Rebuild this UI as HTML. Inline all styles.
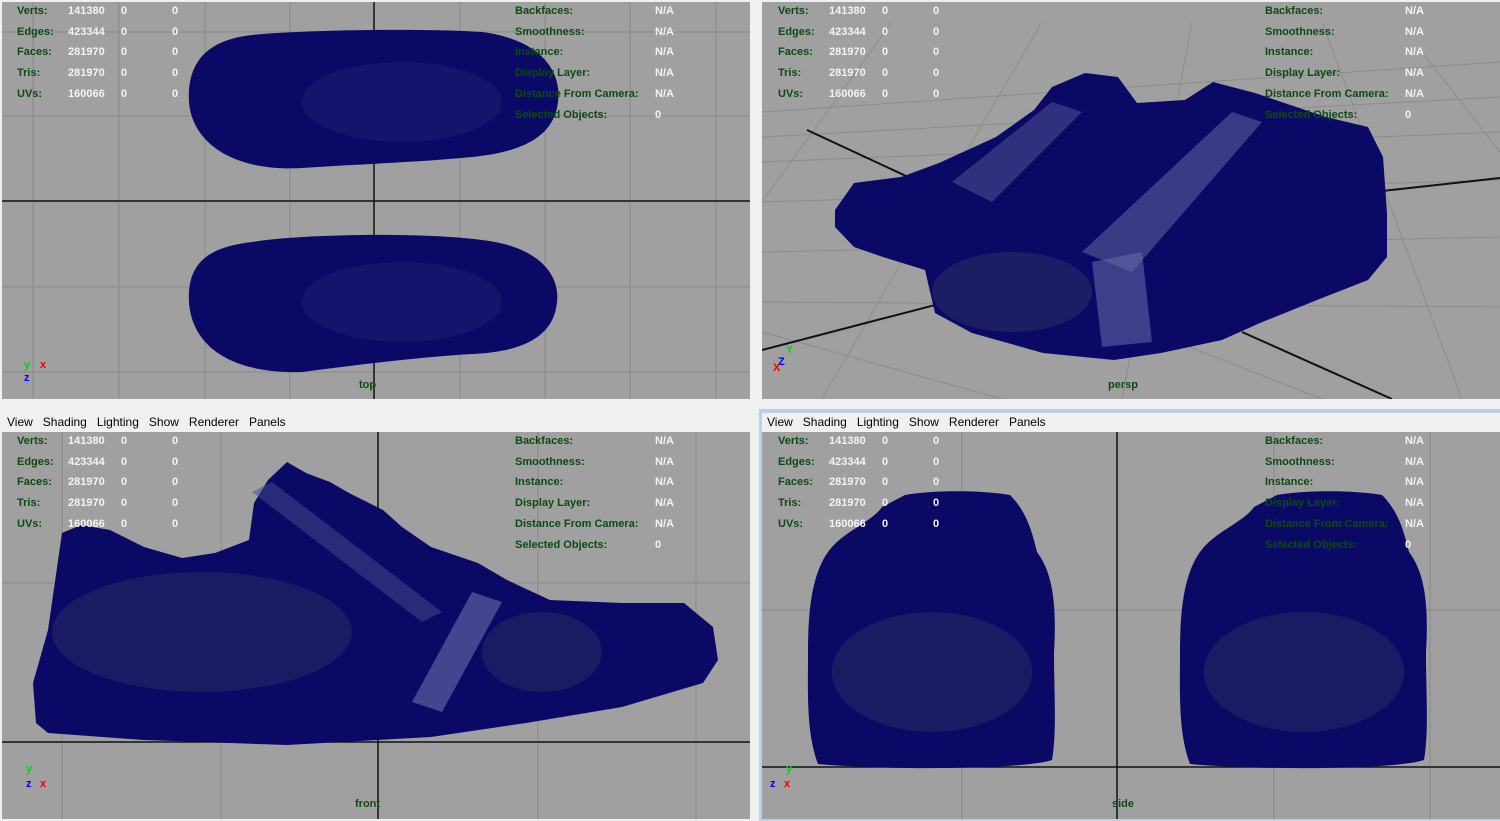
<!DOCTYPE html>
<html><head><meta charset="utf-8"><style>
*{margin:0;padding:0}
body{width:1500px;height:821px;background:#f0f0f0;position:relative;overflow:hidden;font-family:"Liberation Sans",sans-serif}
.vp{position:absolute;background:#a0a0a0;overflow:hidden}
.vp svg{position:absolute;left:0;top:0}
.t{position:absolute;font-size:11px;font-weight:bold;line-height:12px;white-space:nowrap}
.g{color:#0c4a12}.w{color:#f4f4f4}
.menu{position:absolute;height:19px;font-size:12px;line-height:19px;color:#000;background:#f0f0f0}
.menu span{margin-right:10px}
</style></head><body>

<!-- top-left: top -->
<div class="vp" style="left:2px;top:2px;width:748px;height:397px">
<svg width="748" height="397">
<g stroke="#8a8a8a" stroke-width="1">
<line x1="31" y1="0" x2="31" y2="397"/><line x1="117" y1="0" x2="117" y2="397"/><line x1="203" y1="0" x2="203" y2="397"/><line x1="288" y1="0" x2="288" y2="397"/><line x1="458" y1="0" x2="458" y2="397"/><line x1="543" y1="0" x2="543" y2="397"/><line x1="628" y1="0" x2="628" y2="397"/><line x1="714" y1="0" x2="714" y2="397"/>
<line x1="0" y1="30" x2="748" y2="30"/><line x1="0" y1="114" x2="748" y2="114"/><line x1="0" y1="285" x2="748" y2="285"/><line x1="0" y1="370" x2="748" y2="370"/>
</g>
<line x1="372" y1="0" x2="372" y2="397" stroke="#111" stroke-width="1.5"/>
<line x1="0" y1="199" x2="748" y2="199" stroke="#111" stroke-width="1.5"/>
<path d="M250 33 C300 28 420 26 480 30 C540 38 560 70 556 100 C552 135 520 150 470 155 C420 160 360 162 300 166 C230 170 190 140 187 100 C185 60 205 38 250 33Z" fill="#0a0a66"/>
<path d="M250 240 C300 232 420 230 480 238 C540 245 558 275 555 300 C552 335 520 350 470 352 C420 355 360 362 300 370 C230 372 190 345 187 300 C185 262 205 245 250 240Z" fill="#0a0a66"/>
<ellipse cx="400" cy="100" rx="100" ry="40" fill="#1a1a70" opacity=".6"/>
<ellipse cx="400" cy="300" rx="100" ry="40" fill="#1a1a70" opacity=".6"/>
</svg>
<div class="t" style="left:22px;top:357px;color:#1c1;font-size:11px">y</div>
<div class="t" style="left:38px;top:357px;color:#e00">x</div>
<div class="t" style="left:22px;top:370px;color:#00f">z</div>
<div class="t g" style="left:357px;top:377px">top</div>
</div>

<!-- top-right: persp -->
<div class="vp" style="left:762px;top:2px;width:738px;height:397px">
<svg width="738" height="397">
<g stroke="#8c8c8c" stroke-width="1" fill="none">
<line x1="0" y1="110" x2="738" y2="60"/><line x1="0" y1="135" x2="738" y2="95"/><line x1="0" y1="160" x2="738" y2="130"/><line x1="0" y1="200" x2="738" y2="178"/><line x1="0" y1="250" x2="738" y2="235"/><line x1="0" y1="300" x2="738" y2="305"/>
<line x1="130" y1="20" x2="0" y2="200"/><line x1="280" y1="20" x2="60" y2="397"/><line x1="430" y1="20" x2="360" y2="397"/><line x1="560" y1="20" x2="700" y2="397"/><line x1="660" y1="50" x2="738" y2="150"/>
<line x1="0" y1="330" x2="240" y2="397"/><line x1="160" y1="240" x2="560" y2="397"/>
</g>
<line x1="0" y1="348" x2="300" y2="270" stroke="#111" stroke-width="2"/>
<line x1="520" y1="200" x2="738" y2="176" stroke="#111" stroke-width="2"/>
<line x1="45" y1="128" x2="200" y2="200" stroke="#111" stroke-width="2"/>
<line x1="480" y1="330" x2="630" y2="397" stroke="#111" stroke-width="2"/>
<path d="M73 208 L92 181 L139 175 L177 161 L234 135 L272 108 L290 85 L323 71 L356 75 L375 101 L423 98 L451 80 L493 91 L564 115 L606 125 L621 155 L625 211 L625 255 L606 278 L555 298 L498 321 L460 338 L399 351 L352 358 L281 351 L210 331 L173 311 L163 268 L121 255 L92 245 L73 225Z" fill="#0a0a66"/>
<path d="M190 180 L290 100 L320 110 L230 200Z" fill="#4a4a90" opacity=".6"/>
<path d="M320 250 L470 110 L500 120 L370 270Z" fill="#5a5a9a" opacity=".6"/>
<path d="M330 260 L380 250 L390 340 L340 345Z" fill="#6a6aa8" opacity=".55"/>
<ellipse cx="250" cy="290" rx="80" ry="40" fill="#2a2a60" opacity=".6"/>
</svg>
<div class="t" style="left:24px;top:342px;color:#1c1">Y</div>
<div class="t" style="left:16px;top:354px;color:#00f">Z</div>
<div class="t" style="left:11px;top:360px;color:#e00">X</div>
<div class="t g" style="left:346px;top:377px">persp</div>
</div>

<!-- bottom-left menu -->
<div class="menu" style="left:0;top:413px;width:750px;padding-left:7px"><span>View</span><span>Shading</span><span>Lighting</span><span>Show</span><span>Renderer</span><span>Panels</span></div>

<!-- bottom-left: front -->
<div class="vp" style="left:2px;top:432px;width:748px;height:387px">
<svg width="748" height="387">
<g stroke="#8a8a8a"><line x1="60" y1="0" x2="60" y2="387"/><line x1="219" y1="0" x2="219" y2="387"/><line x1="536" y1="0" x2="536" y2="387"/><line x1="694" y1="0" x2="694" y2="387"/><line x1="0" y1="151" x2="748" y2="151"/></g>
<line x1="376" y1="0" x2="376" y2="387" stroke="#111" stroke-width="1.5"/>
<line x1="0" y1="310" x2="748" y2="310" stroke="#111" stroke-width="1.5"/>
<path d="M34 291 L31 251 L46 198 L60 101 L79 93 L108 98 L142 115 L180 126 L213 121 L247 108 L252 71 L266 48 L285 30 L304 41 L328 50 L347 61 L381 78 L400 95 L429 115 L476 131 L505 148 L548 168 L620 171 L682 171 L711 195 L716 228 L701 251 L620 275 L524 291 L429 305 L285 313 L142 308 L46 301Z" fill="#0a0a66"/>
<path d="M410 270 L470 160 L500 170 L440 280Z" fill="#6a6aaa" opacity=".6"/>
<path d="M250 60 L420 190 L440 180 L270 50Z" fill="#4a4a90" opacity=".5"/>
<ellipse cx="200" cy="200" rx="150" ry="60" fill="#262660" opacity=".6"/>
<ellipse cx="540" cy="220" rx="60" ry="40" fill="#262660" opacity=".6"/>
</svg>
<div class="t" style="left:24px;top:331px;color:#1c1">y</div>
<div class="t" style="left:24px;top:346px;color:#00f">z</div>
<div class="t" style="left:38px;top:346px;color:#e00">x</div>
<div class="t g" style="left:353px;top:366px">front</div>
</div>

<!-- bottom-right panel -->
<div style="position:absolute;left:759px;top:409px;width:741px;height:412px;background:#b8d0e8"></div>
<div class="menu" style="left:762px;top:413px;width:738px;padding-left:5px"><span>View</span><span>Shading</span><span>Lighting</span><span>Show</span><span>Renderer</span><span>Panels</span></div>
<div class="vp" style="left:762px;top:432px;width:738px;height:387px">
<svg width="738" height="387">
<g stroke="#8a8a8a"><line x1="200" y1="0" x2="200" y2="387"/><line x1="512" y1="0" x2="512" y2="387"/><line x1="668" y1="0" x2="668" y2="387"/><line x1="0" y1="178" x2="738" y2="178"/></g>
<line x1="355" y1="0" x2="355" y2="387" stroke="#111" stroke-width="1.5"/>
<line x1="0" y1="335" x2="738" y2="335" stroke="#111" stroke-width="1.5"/>
<path d="M143 63 C170 58 220 58 248 63 C265 80 270 100 275 120 C290 140 295 170 292 220 C292 260 295 300 290 328 C260 338 120 338 56 332 C44 300 46 260 46 220 C46 170 52 140 66 120 C80 100 110 90 120 75 Z" fill="#0a0a66"/>
<path d="M515 63 C542 58 592 58 620 63 C637 80 642 100 647 120 C662 140 667 170 664 220 C664 260 667 300 662 328 C632 338 492 338 428 332 C416 300 418 260 418 220 C418 170 424 140 438 120 C452 100 482 90 492 75 Z" fill="#0a0a66"/>
<ellipse cx="170" cy="240" rx="100" ry="60" fill="#262660" opacity=".6"/>
<ellipse cx="542" cy="240" rx="100" ry="60" fill="#262660" opacity=".6"/>
</svg>
<div class="t" style="left:24px;top:331px;color:#1c1">y</div>
<div class="t" style="left:8px;top:346px;color:#00f">z</div>
<div class="t" style="left:22px;top:346px;color:#e00">x</div>
<div class="t g" style="left:350px;top:366px">side</div>
</div>

<!-- HUD text -->
<div id="hud"></div>
<script>
var L=["Verts:","Edges:","Faces:","Tris:","UVs:"],V=["141380","423344","281970","281970","160066"];
var R=["Backfaces:","Smoothness:","Instance:","Display Layer:","Distance From Camera:","Selected Objects:"],RV=["N/A","N/A","N/A","N/A","N/A","0"];
var panels=[[0,5],[761,5],[0,435],[761,435]],h="";
panels.forEach(function(p){var x=p[0],y=p[1];
for(var i=0;i<5;i++){var yy=y+i*20.7;
h+='<div class="t g" style="left:'+(x+17)+'px;top:'+yy+'px">'+L[i]+'</div>';
h+='<div class="t w" style="left:'+(x+68)+'px;top:'+yy+'px">'+V[i]+'</div>';
h+='<div class="t w" style="left:'+(x+121)+'px;top:'+yy+'px">0</div>';
h+='<div class="t w" style="left:'+(x+172)+'px;top:'+yy+'px">0</div>';}
var rx=x+(x?504:515);var vx=x+(x?644:655);
for(var i=0;i<6;i++){var yy=y+i*20.7;
h+='<div class="t g" style="left:'+rx+'px;top:'+yy+'px">'+R[i]+'</div>';
h+='<div class="t w" style="left:'+vx+'px;top:'+yy+'px">'+RV[i]+'</div>';}
});
document.getElementById("hud").innerHTML=h;
</script>
</body></html>
